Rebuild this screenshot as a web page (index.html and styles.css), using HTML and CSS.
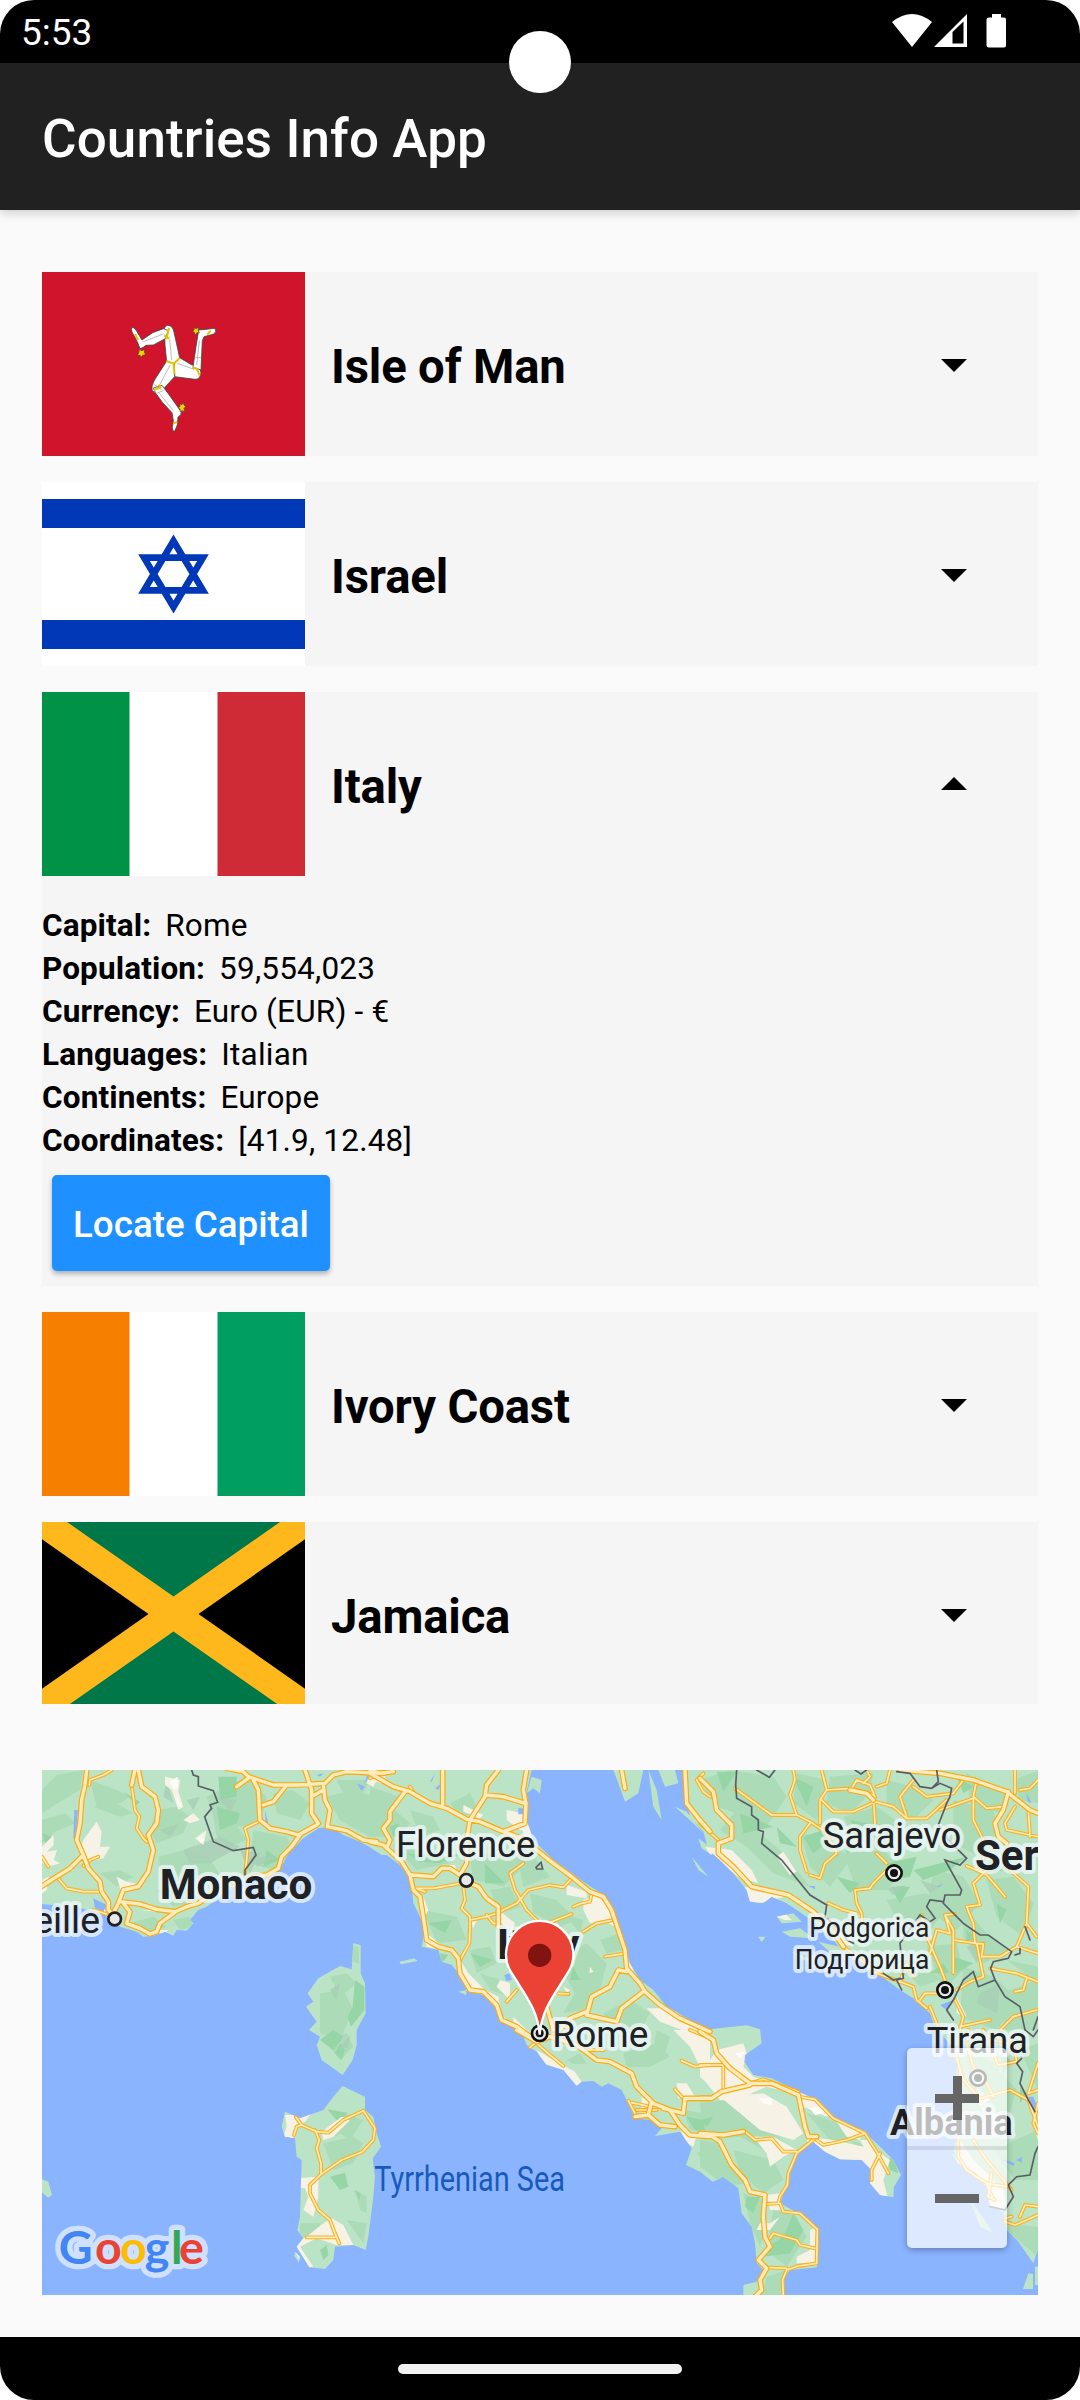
FILE: index.html
```html
<!DOCTYPE html>
<html lang="en">
<head>
<meta charset="utf-8">
<title>Countries Info App</title>
<link rel="stylesheet" href="styles.css">
</head>
<body>
<div class="screen">
  <header class="status">
    <span class="clock">5:53</span>
    <svg class="status-icons" width="116" height="36" viewBox="891 13 116 36">
      <path fill="#fff" d="M892 22Q912 6 932 22L912 47Z"/>
      <path fill="#fff" fill-rule="evenodd" d="M934 47L967 14V47ZM952.500 32V43.500H963.500V21.500Z"/>
      <path fill="#fff" d="M992 14h9v3.500h3q2 0 2 2v26q0 2-2 2h-15q-2.500 0-2.500-2v-26q0-2 2.500-2h3z"/>
    </svg>
    <i class="camera"></i>
  </header>
  <div class="appbar"><h1>Countries Info App</h1></div>

  <main>
    <section class="list">
      <article class="card">
        <div class="row">
          <svg class="flag" viewBox="0 0 263 184">
            <path fill="#cf142b" d="M0 0h263v184H0z"/>
            <g transform="translate(78 38) scale(.33333)" stroke="#444" stroke-width="2.500" stroke-linejoin="round">
              <g fill="#fff">
                <path d="M140 155L135 105 134 72Q128 50 143 46 158 46 162 66L179 143 163 162Z"/>
                <path d="M130 56L98 68 66 90 48 60Q40 50 35 53 32 62 44 80L54 100 60 116 70 112 78 106 100 105 136 86 145 62Z"/>
                <path d="M179 143L214 164Q240 165 243 188 241 208 225 208L164 200 163 162Z"/>
                <path d="M219 172L228 110 236 60 258 58 284 55Q292 64 282 72L252 80 247 92 243 180Z"/>
                <path d="M140 153L106 206Q92 228 97 242 106 254 120 248L164 200 163 162Z"/>
                <path d="M126 226L150 258 178 298Q188 304 182 314L174 322 172 345 164 364Q156 364 157 352L160 332 156 308 128 278 106 248 100 234Z"/>
              </g>
              <g fill="none" stroke="#999" stroke-width="2"><path d="M149 88L155 150M68 96L130 72M230 165L238 92M172 160L222 178M150 166L115 232M116 248L160 302M100 222L126 240M222 143L244 143M108 250L130 242"/></g>
              <g fill="none" stroke="#e3c300" stroke-width="6"><path d="M139 153L161 161 179 144M161 161L163 192M147 54L139 88M132 76L148 86M102 240L122 232 116 224M217 173L230 176 239 196M45 72L54 90M160 340L172 336M262 74L272 62"/></g>
              <path fill="#f4cc00" stroke-width="2" d="M58 118l7 4 9-3-1 8 4 7-9 2-4 6-4-6-8 0 4-7zM222 53l7 3 8-5-2 10 3 8-7-1-6 7-2-8-6-3 5-4zM180 281l6 3 4-7 2 8 5 5-5 5 2 10-8-3-5 4-1-9-5-3 5-5z"/>
            </g>
          </svg>
          <h2>Isle of Man</h2>
          <svg class="arrow" viewBox="0 0 26 13"><path d="M0 0h26L13 13z"/></svg>
        </div>
      </article>
      <article class="card">
        <div class="row">
          <svg class="flag" viewBox="0 0 263 184">
            <path fill="#fff" d="M0 0h263v184H0z"/>
            <path fill="#0038b8" d="M0 17h263v29H0zM0 138h263v29H0z"/>
            <path fill="none" stroke="#0038b8" stroke-width="6.600" d="M131.500 59L102 108.400H161ZM131.500 125L102 75.600H161Z"/>
          </svg>
          <h2>Israel</h2>
          <svg class="arrow" viewBox="0 0 26 13"><path d="M0 0h26L13 13z"/></svg>
        </div>
      </article>
      <article class="card open">
        <div class="row">
          <svg class="flag" viewBox="0 0 263 184"><path fill="#fff" d="M0 0h263v184H0z"/><path fill="#009246" d="M0 0h87.500v184H0z"/><path fill="#ce2b37" d="M175.500 0H263v184h-87.500z"/></svg>
          <h2>Italy</h2>
          <svg class="arrow up" viewBox="0 0 26 13"><path d="M0 13h26L13 0z"/></svg>
        </div>
        <dl class="details">
          <div><dt>Capital:</dt><dd>Rome</dd></div>
          <div><dt>Population:</dt><dd>59,554,023</dd></div>
          <div><dt>Currency:</dt><dd>Euro (EUR) - €</dd></div>
          <div><dt>Languages:</dt><dd>Italian</dd></div>
          <div><dt>Continents:</dt><dd>Europe</dd></div>
          <div><dt>Coordinates:</dt><dd>[41.9, 12.48]</dd></div>
        </dl>
        <button class="locate">Locate Capital</button>
      </article>
      <article class="card">
        <div class="row">
          <svg class="flag" viewBox="0 0 263 184"><path fill="#fff" d="M0 0h263v184H0z"/><path fill="#f77f00" d="M0 0h87.500v184H0z"/><path fill="#009e60" d="M175.500 0H263v184h-87.500z"/></svg>
          <h2>Ivory Coast</h2>
          <svg class="arrow" viewBox="0 0 26 13"><path d="M0 0h26L13 13z"/></svg>
        </div>
      </article>
      <article class="card">
        <div class="row">
          <svg class="flag" viewBox="0 0 263 184"><path fill="#ffb81c" d="M0 0h263v184H0z"/><path fill="#007749" d="M25 0H238L131.500 74.500ZM25 184H238L131.500 109.500Z"/><path d="M0 17.300V166.700L106.500 92ZM263 17.300V166.700L156.500 92Z"/></svg>
          <h2>Jamaica</h2>
          <svg class="arrow" viewBox="0 0 26 13"><path d="M0 0h26L13 13z"/></svg>
        </div>
      </article>
    </section>

    <section class="map">
      <svg class="canvas" viewBox="6 30 2988 1575" preserveAspectRatio="none">
        <defs>
          <clipPath id="land">
            <path d="M0,30 L0,432 60,436 110,440 160,455 200,465 240,500 290,515 310,530 340,528 375,515 400,527 410,510 440,512 460,490 450,480 475,450 500,440 560,395 620,358 700,345 730,310 745,280 790,235 835,205 870,200 910,225 960,245 990,262 1025,285 1040,285 1080,315 1100,340 1115,380 1120,430 1140,470 1155,510 1145,560 1195,570 1205,605 1235,615 1265,650 1280,690 1330,705 1365,740 1380,785 1440,805 1460,855 1490,875 1520,915 1570,930 1610,977 1625,965 1660,963 1685,980 1705,970 1745,990 1760,1020 1785,1075 1830,1080 1865,1105 1845,1128 1920,1115 1955,1165 1938,1215 1980,1235 2018,1265 2050,1250 2095,1285 2105,1360 2135,1400 2145,1450 2150,1510 2170,1530 2150,1565 2110,1575 2110,1610 2235,1610 2230,1555 2250,1530 2330,1522 2335,1410 2275,1360 2220,1330 2242,1270 2270,1180 2320,1145 2355,1175 2400,1198 2465,1200 2495,1230 2490,1270 2520,1305 2560,1312 2562,1280 2583,1245 2560,1200 2510,1150 2470,1115 2380,1070 2330,1020 2275,995 2195,955 2140,945 2113,905 2115,885 2165,850 2160,808 2120,796 2010,808 1975,800 1910,755 1880,740 1840,690 1800,660 1770,610 1740,520 1720,450 1690,405 1630,365 1540,300 1480,240 1460,180 1455,130 1460,95 1475,30Z"/>
            <path d="M1935,20 L1935,100 1950,170 1990,215 2005,270 2040,300 2080,340 2120,390 2130,425 2170,430 2195,410 2240,430 2300,470 2380,540 2410,575 2460,600 2520,645 2580,690 2620,715 2670,760 2680,790 2710,830 2760,885 2750,930 2750,970 2770,1010 2760,1110 2740,1170 2755,1210 2810,1240 2845,1290 2850,1340 2890,1355 2900,1410 2935,1445 2980,1510 3000,1450 3000,20Z"/>
            <path d="M940,550 962,555 962,640 975,670 977,760 950,810 950,855 938,900 908,945 845,900 830,855 840,830 807,810 830,785 798,740 820,725 803,700 835,655 900,618 935,628Z"/>
            <path d="M908,978 975,1010 975,1050 1000,1070 1010,1120 1023,1160 998,1195 1005,1250 1000,1310 985,1430 977,1470 940,1455 885,1460 880,1500 855,1527 808,1522 770,1460 790,1435 772,1410 780,1370 785,1200 770,1190 765,1135 735,1130 725,1100 735,1055 780,1075 850,1050 880,1010Z"/>
            <path d="M1475,50l30,10-5,40-20-15-20,15zM1720,30h90l-15,70-40,25-20-55zM1825,30l25,60 15,90-25-40zM1855,30h50l10,40-40,10zM1905,140l35,15 50,65-35-35zM1975,235l40,30v20l-30,-20zM1955,290l50,60-30,-20zM0,1255l25,10 11,40-11,8-25-20zM1078,605l45-10 10,8-50,10zM1255,695l25,-5-2,15zM2210,470l50-10 25,25-60,5zM2225,515l55-10 40,30-70,-5zM2155,530h22l-12,16zM2335,545l65,15 30,22-60-5zM2255,575l80,30-50-5zM765,1475l14,15-2,18-14-20zM2730,1170l40,50-20,-15zM2790,1320l30,40 40,60-40-20zM2965,1540l14,2v45h-30zM2985,1520h15v55h-15z"/>
          </clipPath>
          <g id="major">
            <path d="M140,30L135,75 125,120 120,190 110,240 130,285 145,325 180,365 185,395 205,425 205,450 220,465M130,285L90,325 50,350 6,378M285,30L275,75M295,30L305,80 345,110 355,150 350,190 325,225 340,270 325,335 295,380 250,390 235,430 220,460M240,425L300,432 350,448 405,455 440,440 475,430 520,400 570,375M250,430L270,455 260,490 300,505 330,522 350,515 360,490 405,457M560,25L610,35 625,50 700,75 770,75 855,70 880,45 920,35 1030,40M640,60L655,90 660,180 690,205 740,215 775,225 830,195M795,30L815,90 815,160 835,190M850,75L855,120 870,150 862,200 920,212 970,240 1010,245M780,225L755,260 725,290 715,325 680,345 640,350M590,80L625,55M740,75L700,125 670,135M815,110L850,90"/>
            <path transform="translate(990)" d="M0,40L70,80 120,95 180,130 230,145 290,178 330,185 400,215 455,235 500,270 550,310 605,350 660,395 700,410 725,450 745,510 765,570 770,625 810,670 825,695 870,735 930,775 1020,815M218,30V135M385,30L350,75 345,110 300,180 290,240 290,310 270,345 240,325 215,325 190,350 125,345M345,105L400,110 465,130M470,30L460,90 468,130 465,190 400,215M105,95L60,155 60,180 40,205 60,240 50,265M0,245L40,255 95,305 120,345 130,390 150,410 160,470 170,540 205,560 245,570 265,595 270,640 300,690 340,695 380,735 395,780 440,800 480,830M290,365L325,380 350,415 385,440 385,500M820,695L755,745 740,785 650,765 665,710 720,680 745,630 770,635M650,755L600,775 560,820M530,740L550,810M755,30L765,85M945,30L950,130 985,175 1020,215M0,30L30,40 70,35"/>
            <path transform="translate(1980)" d="M0,55L40,95 50,150 95,195 95,235 55,250 55,280 100,320 155,380 265,405 340,455 400,515 430,560M600,30L720,40 820,60 920,95 990,150 1014,160M925,95L910,150 885,190 895,230 920,250M450,90L500,100 520,120"/>
            <path transform="translate(990 810)" d="M440,0L500,35 540,20 620,45 680,90 720,95 785,130 800,170 850,220 900,240 930,285 960,315 1020,320M845,215L835,255 870,285 915,290M880,235L940,250 945,205 1020,205M795,260L835,255"/>
            <path transform="translate(1980 810)" d="M0,5L40,30 50,70 90,115 150,160 215,160 295,195 315,290 325,320 350,320M0,205L35,205 65,185 150,165M0,310L70,315 130,305M30,315L60,335 95,405 135,450 150,485 195,495 190,560 195,620 210,650 175,690 200,715 180,750 185,780 165,800"/>
          </g>
          <g id="minor">
            <path d="M275,75L285,150 298,170 290,205 310,235 320,245M50,350L80,385 130,395 180,395M215,30L190,45 150,60 148,75M655,185L615,205 625,240 620,300 615,340M160,450L200,462M6,290L25,320M175,290L150,300 130,318M768,1072L785,1095 830,1115 865,1118 910,1080 970,1052 1005,1105 1000,1140 968,1175 905,1200 843,1243 810,1275 810,1300 835,1350 870,1380 885,1420 898,1450M762,1125L770,1100 785,1095M825,1110L838,1140 830,1165 843,1210 843,1243M800,1432L885,1432"/>
            <path transform="translate(990)" d="M125,385L190,385 270,370M280,380L285,420 275,445 300,470 300,500 298,550 270,600M300,480L350,470 380,460 440,430 475,390 540,375 580,382 605,355M460,310L420,340 435,390 470,450 500,480M610,440L635,430 660,425 665,400M545,485L605,462M640,515L680,490 730,480M705,590L765,580M410,725L440,690M565,700L595,702M1000,40L980,60 1000,95 1020,110M135,385L165,395M120,80L135,105M0,55L20,45M350,465L370,490 385,490"/>
            <path transform="translate(1980)" d="M105,85L215,165 290,165 330,185 375,215 410,280 375,310 360,355 330,345M330,190L300,230 300,270 320,335M280,30L285,60 270,105 290,165M365,30L380,90 360,120 360,190M380,90L455,85 520,105 525,190M365,120L400,155 460,155 525,125 580,140 620,175 680,175 740,120M640,60L600,110 620,170M455,85L470,60 510,75 525,110M500,30L510,50 490,70M570,30L560,70 530,80M640,80L680,110 720,105 760,100 790,60M720,150L820,115 820,180 850,240 850,300M830,60L820,110M560,330L520,370 510,385 465,390 470,430 485,460V490M530,280L560,310M385,430L430,450 470,460M0,190L55,240M820,110L860,145 910,140M945,140L915,190 920,210 1014,230M985,150L990,230M1014,60L990,85 960,90M945,100V30M800,318L830,330 860,345 890,380 915,410M860,330L820,370 840,435 800,440 820,490 825,550M930,330L985,380 980,490 950,560M980,490L1010,530M735,465L750,520 710,510 690,580M665,465L680,530 720,620 735,660M735,465L760,510 760,540 830,550 840,600 850,650 810,665 770,690M760,540V640M730,700L675,700 660,720M600,665L640,680 650,720 680,745M530,640L600,665 620,610 640,650M690,740L710,790 720,810M845,590L900,590 950,560 1014,580M870,625L950,640 1014,665M980,655L970,690 945,695M765,720L790,770 780,810M780,800L870,780M900,810L940,770 1010,750M735,465L765,462M430,560L470,590 530,640M830,550L850,552 845,590"/>
            <path transform="translate(990 810)" d="M500,40L540,75 580,108M775,212L800,260 835,260M785,218L840,230M800,240L860,240M935,92L975,110 1020,105M960,0L1010,20M915,178L940,205M480,52L500,35M640,60L700,60"/>
            <path transform="translate(1980 810)" d="M295,200L345,208 400,265 495,310 530,365 565,430M150,160L190,148 295,185M0,105L70,105 70,180M135,305L165,330 215,325 250,365 290,365M345,325L290,370 265,430 262,465 240,500 235,520 195,522M350,330L370,345 440,330 495,310M240,520L250,545 300,550 352,598 350,700 295,708 260,720 248,750 250,800M210,625L220,610 290,630 300,645 345,655M200,712L260,715M540,370L515,420 515,450M805,0L800,40 820,110 860,160 880,200M760,50L790,150 840,205 930,180 985,210 1014,290M850,0L895,105 950,95M950,95L940,40 870,30M780,120L775,200M775,300V380L800,420 860,460 880,510M820,330L860,390 935,480M875,430L865,500 885,510M860,460L920,470M915,575L945,585 1014,555M960,560L975,525 1014,530M1014,100L985,190 1014,180M1014,220L1000,280 1014,310M915,565L935,560"/>
          </g>
        </defs>
        <path fill="#8bb4ff" d="M0 20h3000v1600H0z"/>
        <g clip-path="url(#land)">
          <path fill="#bbe3c6" d="M0 20h3000v1600H0z"/>
          <g fill="#acdcb7">
            <path d="M6,90L50,45 130,30 120,90 60,125 6,160zM150,60l80,30 40,20-30,20-70,10zM6,180l70-20 30,30-60,25-40,35zM160,140l70,-10 50,30-40,10zM350,150l60-10 40,30-20,50-80,30-20-40zM355,290l80-20 70,20 40,60-100,20-80-20zM180,340l60-10 40,20-50,30zM350,390l100,0 30,30-80,20zM500,110l120-60 60,60-20,80-60,10-80-30zM520,170l60,10 40,60-50,20-40-30zM640,210l100,20 20,40-60,60-70-20zM700,100l60-10 50,40-30,50-70,-20zM860,110l80-20 90,30 80,70 -30,40-90,0-90-50zM890,60l100,0-20,40-60,0zM270,490l70,-20 40,30-60,20zM400,480l50,-10 10,30-40,10zM930,560l25,0 3,50-20,-5zM870,650l50-10 30,30-50,40zM840,700l70-10 30,60-40,90-60-20zM850,840l70-20 20,40-40,40z"/>
            <path transform="translate(990)" d="M0,80L90,110 60,160 100,210 60,240 0,190zM120,150l70,20 20,40-60,20zM240,130l60,-30 30,60-60,10zM80,270l100,0 60,40-100,20zM300,290l130-20 30,50-60,60-90,-20zM440,280l60,20 40,50-80,30zM360,390l60,-10 30,60-60,20zM480,400l80,20 60,60-50,20-80,-40zM580,460l60,20-10,40zM160,450l100,20 30,70-90,10zM300,570l60-10 20,50-60,30zM330,640l60,20 30,50-60,-20zM560,600l90-50 60,60-20,80-70,20zM690,540l60-20 10,50-50,10zM620,690l60,10-40,50-60,10zM700,760l80-40 60,40-30,50-80,0zM860,700l60,40-30,20z"/>
            <path transform="translate(1980)" d="M0,60L90,30 220,50 260,110 200,200 110,160 50,140zM110,150l60,60 80,70 80,100-110,-40-80-80-80,-50zM290,40l90,20-30,120-70,-50zM390,50l130,-10-10,60-60,60-70-30zM300,220l90,10 60,70-60,80-60,-60zM430,280l120,-10 60,60-50,60-90,0zM430,170l100,-30 70,50-30,70-90,0zM560,60l80,20 60,40-60,60-80,-40zM760,120l120,30 20,80-60,60-80,-40zM800,40l120,60-20,60-90,-30zM940,60l80,-30v100l-60,-10zM700,330l90,20 50,80-70,80-90,-60zM560,420l120,-20 60,50-60,70-80,-20zM860,360l80,-10 60,80-30,100-80,-60zM790,440l80,90 60,40-80,40-60,-80zM680,560l90,-10 20,80-60,60zM790,620l90,30 80,70-70,90-110,-40zM590,600l80,0 50,60-60,20zM900,700l114,-40v150h-100zM920,600l94,20v50z"/>
            <path transform="translate(990 810)" d="M590,90l40,-20 20,32-40,0zM760,70l100,-30 40,40-60,30-70,0zM860,0l40,20-20,70-40,20zM940,240l60,10 20,60-60,-10zM980,370l50,-30v60l-30,-10z"/>
            <path transform="translate(1980 810)" d="M0,220l80,-10 120,60 60,80-70,10-70,-40-110,10zM0,330l60,10 80,120-60,10-80,-60zM100,360l120,30 30,60-60,40-70,-60zM130,490l60,20 10,80-20,60-30,-70zM220,540l70,20 30,60-60,90-60,-50zM200,740l60,-20-20,90h-60zM240,120l50,60-60,0zM320,250l100,30 60,50-90,0zM450,330l60,20-20,20zM800,60l80,40 70,80-30,100-100,-80zM880,360l134,-60v150l-70,0zM900,580l114,10v90l-60,-50zM960,60l54,-20v140z"/>
            <path d="M850,1150l90,-20 30,20-30,60-60,20zM860,1110l60,-10-30,30zM945,1290l35,20 0,50-20,-10zM780,1390l60,0 0,25-60,20zM920,1380l60,10-10,60zM910,1060l60,20-40,60-30,-20z"/>
          </g>
          <g fill="#95d5a6">
            <path d="M535,50l55,0 0,60-50,10zM530,140l70,20-10,30-50,20zM250,95l50,30-10,10zM6,220l30,10-20,20zM680,270l40,30-50,20zM945,660l28,20 0,70-40,50-10,-30 15,-30zM840,840l40,-30 30,20-30,40zM885,880l15,-30 15,20-10,30zM862,1048l60,10-25,30zM870,1250l45,-12 10,42-25,10zM942,1290l20,10-3,20zM840,1470l20,-15 5,30-15,15z"/>
            <path transform="translate(990)" d="M60,200l30,-10-20,40zM110,280l110,10 60,-10-70,30-60,-5zM345,310l60,60-60,0zM175,490l70,-10-20,40zM300,580l70,20-40,20zM210,580l25,5-20,25zM610,620l20,40-30,0z"/>
            <path transform="translate(1980)" d="M50,35l60,0-40,60zM120,160l100,40-90,20zM230,200l60,60-50,-10zM280,50l60,30-20,60zM310,230l60,-20 20,30-50,40zM410,350l70,20-30,30zM560,310l90,-20-20,60-60,10zM640,330l160,-40-50,40-80,30zM570,380l60,0-30,50zM430,250l60,10-50,20zM870,300l60,30-90,10zM890,430l30,20-20,40zM800,510l30,20-30,20zM690,640l40,-30 20,30zM760,590l60,20-50,30zM770,50l50,30-30,20zM450,180l50,10-30,20z"/>
            <path transform="translate(1980 810)" d="M0,270l40,-10-20,30zM140,500l40,0-20,50-25,-20zM190,660l60,-40 30,-70 30,50-40,70-80,10zM560,390l20,-10 15,50-25,-10zM-40,260l50,10 5,30-30,0zM900,70l30,20-20,40zM960,170l20,20-20,30z"/>
          </g>
          <g fill="#a7cdb4" opacity=".75">
            <path d="M360,210l60,-20-30,40zM380,60l20,70-30,-20zM430,270l110,-40 60,30-90,50-60,0zM600,270l60,10-30,60zM640,290l70,0-60,30zM440,120l40,-10-20,40zM530,110l60,10-20,40zM870,690l30,-20-10,50zM900,860l30,-35-5,40zM2780,560l60,-20-30,70zM2820,700l60,-30-10,90-60,-30zM2540,385l60,-10-40,30zM2640,360l60,20-30,20zM2630,480l50,20-30,30z"/>
          </g>
          <g fill="#f6f2e6">
            <path d="M130,240l40,-55 15,30-5,45 30,0-20,35-45,10-25,-35zM6,260l35,-35 0,30-20,20 30,-5-10,30 20,10-40,10-15,-15zM6,360l20,-10-6,40-14,10zM230,350l30,15 25,5-10,20-30,10zM375,50l45,10-5,35 15,45-15,10-20,-60-20,-15zM465,235l35,-25-10,45zM430,180l30,-20 20,20-30,10zM985,60l20,-30 40,0-20,40zM165,445l35,5 30,40-40,-25zM350,510l35,0-15,18zM300,450l50,0 0,5zM735,1065l30,0 50,-5-20,25-30,15-5,35-30,-5 10,-30zM845,1115l60,-45 25,10-50,50-30,10zM770,1255l65,-5 0,60-15,60-30,-20 15,-40-10,-25-25,-2zM800,1430l50,-40 25,-15 35,20 30,60-50,0-60,-20-50,25 40,60-30,5-30,-60 10,-20z"/>
            <path transform="translate(990)" d="M0,40l20,20-10,20-20,-10zM280,135l60,30-10,10-50,-20zM410,150l50,10 20,50-30,0-40,-30zM450,190l30,10 20,60-30,-10zM590,375l60,20 0,20-60,-10zM640,420l60,-20 40,50 10,60-50,-30-40,10-20,-40zM385,450l50,40-10,30-40,-40zM160,410l15,40-10,20zM150,460l20,60 60,50-60,-10-15,-50zM300,480l20,0-10,25zM235,315l20,0 5,20zM265,590l30,50 50,50 40,20 10,60-60,-60-50,-20-20,-40zM390,660l30,10 0,50-40,-40zM510,640l60,30-40,50-50,-30zM830,745l50,0 50,30 60,40-40,0-80,-30zM770,590l20,40-10,10zM430,770l50,50-50,-20zM660,620l10,15-12,5zM580,680l20,10-10,10z"/>
            <path transform="translate(990 810)" d="M500,60l60,35 55,30 20,30-15,15-40,-50-60,-20zM910,0l110,0 0,150-30,-40-30,-60zM920,160l30,0 25,40-50,5zM815,200l30,20-10,40-20,-10zM930,295l50,20-10,35-20,-10z"/>
            <path transform="translate(1980)" d="M15,260l80,10 60,60 20,40-60,-20-80,-60zM230,290l20,-15 40,60-20,10zM135,380l60,15 60,15-80,20-40,-10zM410,510l40,10 10,40-40,-10zM230,470l25,-10 20,20-20,0zM770,710l20,40 10,20-30,-10zM500,600l60,50-60,-20z"/>
            <path transform="translate(1980 810)" d="M0,90l30,0 20,-30 80,-20 10,30-10,40 30,30 60,20 90,20-30,10-80,-20-90,40-50,0-40,-50-20,-20zM60,200l130,-10 70,40 50,80-30,20-100,-30-60,-50zM160,320l60,0 70,40-40,20-40,30-10,-40zM300,180l50,20 50,50-20,10-70,-30zM320,320l80,10 90,20-10,-20 30,0 30,40 30,20-20,60 15,60-60,-20-20,-60-50,-20-60,-20-50,-20zM400,260l90,40-10,30-40,-10zM330,600l20,-10 0,110-60,0 0,-20 40,-20zM180,580l30,0 30,-20-30,40-40,0zM200,495l40,-5 0,50-30,0zM780,330l40,60 50,50 40,40 10,50-60,10-90,-130zM1000,290l14,10v30zM820,100l20,60-30,0zM830,170l40,40-30,20z"/>
          </g>
          <path fill="#fffdfa" d="M388,65l25,-15 0,30-10,10zM410,110l15,30-15,-10zM475,230l20,10-15,8zM2155,1015l40,0 0,20-25,-5zM2310,1045l40,-10 0,25-25,5zM2085,880l30,-5-15,20zM2430,1100l30,0-10,10zM2325,1510l15,0-5,15z"/>
          <path fill="#8bb4ff" d="M103,150l10,0-5,85-8,0zM120,285l12,5-2,20zM675,150l10,40-8,0zM950,70l25,10-10,12zM970,75l12,-30 5,5zM160,415l40,20-10,20-25,-10zM830,45l20,-5-10,10zM1170,65l15,-25-10,25zM1185,85l20,-15-10,20zM1435,145h18v18h-18zM1393,645l15,-5 8,20-18,3zM2305,378l20,0 0,10zM2690,380l20,-10-10,10zM2960,100l15,30-12,-5zM2700,735l40,-15-20,30zM2965,1010l15,0 15,40-10,5zM2880,1195l45,15-5,8zM2930,1200l15,-10 0,18z"/>
        </g>
        <g fill="none" stroke-linejoin="round" stroke-linecap="round">
          <use href="#minor" stroke="#fbb01c" stroke-width="11.500"/>
          <use href="#minor" stroke="#ffebb8" stroke-width="5"/>
          <use href="#major" stroke="#fbab0d" stroke-width="17"/>
          <use href="#major" stroke="#ffebbd" stroke-width="10"/>
          <g stroke="#595e66" stroke-width="5" stroke-linejoin="miter">
            <path d="M455,30L460,45 475,50V78L520,92 533,127 510,135 515,145 494,170 520,245 580,272 640,262 648,285 615,330V345M1488,322l15-15 5,20-18,0z"/>
            <path transform="translate(1980)" d="M110,30L107,75 110,115 155,140 155,165 175,180 175,210 190,215 185,250 245,300 330,405 380,435 375,470 430,520 440,540 460,550M170,30L208,52 225,30M465,30L483,42 500,30M590,35L630,40 660,80 695,85 715,65 710,30M695,85L720,70 755,85 750,110 740,130 715,195 745,240 800,295 780,315 735,300 785,390 780,405 735,405 730,430 790,490 840,525 865,525 935,575 925,595 880,605 872,625 885,660 835,680 820,635 790,660 760,720 740,750 760,780M730,425L690,420 680,440 705,475 690,485 660,465 600,550 605,600 610,655 590,660 605,690M885,660L915,710 960,740 975,810M975,500L990,540M550,640L580,660 600,655M945,585L960,580 960,565M1014,770L1000,810"/>
            <path transform="translate(1980 810)" d="M975,0L1000,20 1014,0M965,85L950,100 968,125 960,160 985,210 1005,245M1014,350L1005,370 990,435 950,440 925,465 940,500 915,540 870,530"/>
          </g>
        </g>
        <g stroke="#222" stroke-width="8" fill="#e8e9eb"><circle cx="224" cy="477" r="19"/><circle cx="1279" cy="361" r="19"/></g>
        <g fill="#e6e8ea" stroke="#111" stroke-width="8"><circle cx="2562" cy="339" r="23"/><circle cx="2715" cy="690" r="23"/><circle cx="1499" cy="820" r="23"/><circle cx="2814" cy="954" r="23"/></g>
        <g fill="#111"><circle cx="2562" cy="339" r="12"/><circle cx="2715" cy="690" r="12"/><circle cx="1499" cy="820" r="12"/><circle cx="2814" cy="954" r="12"/></g>
        <g class="labels">
          <text x="359" y="418" font-size="126" class="b" textLength="458" lengthAdjust="spacingAndGlyphs">Monaco</text>
          <text x="180" y="520" font-size="112" text-anchor="end">eille</text>
          <text x="1068" y="292" font-size="112" textLength="418" lengthAdjust="spacingAndGlyphs">Florence</text>
          <text x="1370" y="597" font-size="130" class="b" textLength="248" lengthAdjust="spacingAndGlyphs">Italy</text>
          <text x="1537" y="862" font-size="112" textLength="288" lengthAdjust="spacingAndGlyphs">Rome</text>
          <text x="2348" y="265" font-size="112" textLength="416" lengthAdjust="spacingAndGlyphs">Sarajevo</text>
          <text x="2805" y="331" font-size="126" class="b">Ser</text>
          <text x="2308" y="532" font-size="82" textLength="360" lengthAdjust="spacingAndGlyphs">Podgorica</text>
          <text x="2264" y="626" font-size="82" textLength="404" lengthAdjust="spacingAndGlyphs">Подгорица</text>
          <text x="2660" y="880" font-size="112" textLength="304" lengthAdjust="spacingAndGlyphs">Tirana</text>
          <text x="2550" y="1124" font-size="112" class="b" textLength="368" lengthAdjust="spacingAndGlyphs">Albania</text>
          <text x="1003" y="1293" font-size="106" class="sea" textLength="572" lengthAdjust="spacingAndGlyphs">Tyrrhenian Sea</text>
        </g>
        <path fill="#ea4335" stroke="#fff" stroke-width="7" d="M1499 824C1493 752 1463 716 1418 644A101 101 0 1 1 1580 644C1535 716 1505 752 1499 824Z"/>
        <circle cx="1499" cy="586" r="35" fill="#811411"/>
        <use href="#logo" stroke="#d0e1ff" stroke-width="32" stroke-linejoin="round"/>
        <text id="logo" class="google" x="56 165 240 314 393 417" y="1511"><tspan fill="#4285f4">G</tspan><tspan fill="#ea4335">o</tspan><tspan fill="#fbbc04">o</tspan><tspan fill="#4285f4">g</tspan><tspan fill="#34a853">l</tspan><tspan fill="#ea4335">e</tspan></text>
      </svg>
      <div class="zoom"><i class="plus"></i><i class="minus"></i></div>
    </section>
  </main>
  <footer class="nav"><i></i></footer>
</div>
</body>
</html>
```
FILE: styles.css
```css
* { box-sizing: border-box; }
body { margin: 0; background: #fff; font-family: Roboto, "Liberation Sans", sans-serif; color: #000; }
h1, h2, dl, dd { margin: 0; }
.screen { width: 1080px; height: 2400px; display: flex; flex-direction: column; background: #fafafa; border-radius: 34px; overflow: hidden; }

.status { position: relative; z-index: 2; height: 63px; background: #000; display: flex; justify-content: space-between; align-items: flex-start; padding: 13px 73px 0 21px; flex: none; }
.clock { color: #fff; font-size: 37px; line-height: 40px; }
.camera { position: absolute; left: 509px; top: 31px; width: 62px; height: 62px; border-radius: 50%; background: #fff; }
.appbar { position: relative; z-index: 1; height: 147px; flex: none; display: flex; align-items: center; padding: 4px 42px 0; background: #212121; box-shadow: 0 3px 10px rgba(0, 0, 0, .18); }
.appbar h1 { color: #fff; font-size: 53px; font-weight: 500; line-height: 62px; letter-spacing: .1px; }

main { flex: 1; padding: 62px 42px 42px; display: flex; flex-direction: column; justify-content: space-between; }
.list { height: 1432px; display: flex; flex-direction: column; gap: 26px; overflow: hidden; }
.card { flex: none; background: #f5f5f5; }
.card.open { height: 594px; }
.row { height: 184px; display: flex; align-items: center; }
.flag { width: 263px; height: 184px; display: block; }
.row h2 { flex: 1; margin-left: 26px; padding-top: 6px; font-size: 47.25px; line-height: 56px; font-weight: 700; letter-spacing: -.15px; }
.arrow { width: 26px; height: 13px; margin: 3px 71px 0 0; }
.arrow.up { margin-top: -1px; }
.details { padding-top: 28px; font-size: 31.5px; line-height: 43px; }
.details div { display: flex; gap: 14px; }
.details dt { font-weight: 700; letter-spacing: .12px; }
.details dd { letter-spacing: .2px; }
.locate { display: block; margin: 13px 0 0 10px; width: 278px; height: 96px; padding: 4px 0 0; border: 0; border-radius: 5px; background: #1e90ff; color: #fff; font: 500 36.75px/44px Roboto, sans-serif; box-shadow: 0 3px 5px rgba(0, 0, 0, .28); white-space: nowrap; }

.map { position: relative; height: 525px; overflow: hidden; }
.canvas { display: block; width: 996px; height: 525px; }
.labels text { font-family: Roboto, sans-serif; fill: #202124; stroke: rgba(240, 247, 250, .75); stroke-width: 24px; stroke-linejoin: round; paint-order: stroke; }
.labels .b { font-weight: 700; }
.labels .sea { fill: #185abc; stroke: none; }
.google { font: 700 140px Lato, sans-serif; }
.zoom { position: absolute; left: 865px; top: 278px; width: 100px; height: 200px; border-radius: 5px; background: linear-gradient(rgba(160, 165, 175, .3), rgba(160, 165, 175, .3)) 0 98px / 100% 4px no-repeat, rgba(255, 255, 255, .7); box-shadow: 0 2px 6px rgba(0, 0, 0, .3); display: flex; flex-direction: column; }
.zoom i { flex: 1; background: linear-gradient(#666, #666) center / 44px 9px no-repeat; }
.zoom .plus { background: linear-gradient(#666, #666) center / 44px 9px no-repeat, linear-gradient(#666, #666) center / 9px 44px no-repeat; }

.nav { height: 63px; flex: none; background: #000; display: flex; justify-content: center; align-items: center; }
.nav i { width: 284px; height: 10px; border-radius: 5px; background: #f2f2f2; }
```
